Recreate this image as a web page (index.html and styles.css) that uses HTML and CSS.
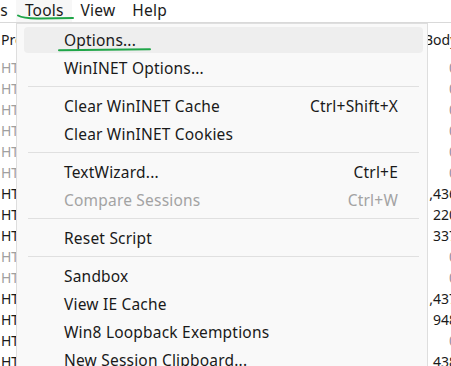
FILE: index.html
```html
<!DOCTYPE html>
<html lang="en">
<head>
    <meta charset="UTF-8">
    <title>Fiddler - Tools menu</title>
    <link rel="stylesheet" href="styles.css">
</head>
<body>
    <div class="menubar">
        <span class="menu-title">Rules</span>
        <span class="menu-title is-open">Tools</span>
        <span class="menu-title">View</span>
        <span class="menu-title">Help</span>
    </div>

    <div class="sessions">
        <div class="row head"><span class="proto">Protocol</span><span class="host"></span><span class="body">Body</span></div>
        <div class="row dim"><span class="proto">HTTP</span><span class="host"></span><span class="body">0</span></div>
        <div class="row dim"><span class="proto">HTTP</span><span class="host"></span><span class="body">0</span></div>
        <div class="row dim"><span class="proto">HTTP</span><span class="host"></span><span class="body">0</span></div>
        <div class="row dim"><span class="proto">HTTP</span><span class="host"></span><span class="body">0</span></div>
        <div class="row dim"><span class="proto">HTTP</span><span class="host"></span><span class="body">0</span></div>
        <div class="row dim"><span class="proto">HTTP</span><span class="host"></span><span class="body">0</span></div>
        <div class="row"><span class="proto">HTTP</span><span class="host"></span><span class="body">1,436</span></div>
        <div class="row"><span class="proto">HTTP</span><span class="host"></span><span class="body">220</span></div>
        <div class="row"><span class="proto">HTTP</span><span class="host"></span><span class="body">337</span></div>
        <div class="row dim"><span class="proto">HTTP</span><span class="host"></span><span class="body">0</span></div>
        <div class="row dim"><span class="proto">HTTP</span><span class="host"></span><span class="body">0</span></div>
        <div class="row"><span class="proto">HTTP</span><span class="host"></span><span class="body">1,437</span></div>
        <div class="row"><span class="proto">HTTP</span><span class="host"></span><span class="body">948</span></div>
        <div class="row"><span class="proto">HTTP</span><span class="host"></span><span class="body zero">0</span></div>
        <div class="row"><span class="proto">HTTP</span><span class="host"></span><span class="body">438</span></div>
    </div>

    <!-- Tools dropdown, open over the session list -->
    <div class="dropdown">
        <div class="item active"><span>Options...</span></div>
        <div class="item"><span>WinINET Options...</span></div>
        <div class="sep"></div>
        <div class="item"><span>Clear WinINET Cache</span><span>Ctrl+Shift+X</span></div>
        <div class="item"><span>Clear WinINET Cookies</span></div>
        <div class="sep"></div>
        <div class="item"><span>TextWizard...</span><span>Ctrl+E</span></div>
        <div class="item disabled"><span>Compare Sessions</span><span>Ctrl+W</span></div>
        <div class="sep"></div>
        <div class="item"><span>Reset Script</span></div>
        <div class="sep"></div>
        <div class="item"><span>Sandbox</span></div>
        <div class="item"><span>View IE Cache</span></div>
        <div class="item"><span>Win8 Loopback Exemptions</span></div>
        <div class="item"><span>New Session Clipboard...</span></div>
    </div>

    <!-- green hand-drawn marks -->
    <svg class="marks" width="451" height="366" viewBox="0 0 451 366">
        <path d="M18 15.5 C 22 18, 28 18.6, 40 18.4 L 73 18" />
        <path d="M59 50.2 C 90 49.8, 120 49.6, 150 49.2" />
    </svg>
</body>
</html>
```

FILE: styles.css
```css
html, body {
    margin: 0;
    overflow: hidden;
}

body {
    position: relative;
    width: 451px;
    height: 366px;
    font-family: "Noto Sans", "Open Sans", sans-serif;
    font-size: 15.5px;
    letter-spacing: 0.2px;
    color: #1a1a1a;
    background: #fff;
}

.menubar {
    display: flex;
    height: 22px;
    margin-left: -41px;
    border-bottom: 1px solid #d9d9d9;
    line-height: 21px;
}

.menu-title {
    padding: 0 8.5px;
}

.menu-title.is-open {
    background-color: #f7f7f7;
}

.sessions {
    width: 457px;
    font-size: 14px;
    letter-spacing: 0;
}

.row {
    display: flex;
    height: 21px;
    line-height: 21px;
}

.row.head {
    height: 34px;
    line-height: 34px;
}

.proto {
    width: 60px;
    padding-left: 1px;
    overflow: hidden;
    white-space: nowrap;
}

.host {
    flex: 1;
}

.body {
    width: 60px;
    text-align: right;
}

.head .body {
    text-align: left;
    padding-left: 27px;
    box-sizing: border-box;
}

.row.dim .proto {
    color: #a0a0a0;
}

.row.dim .body,
.body.zero {
    color: #938fa0;
}

.dropdown {
    position: absolute;
    left: 16px;
    top: 23px;
    display: flex;
    flex-direction: column;
    width: 412px;
    height: 360px;
    box-sizing: border-box;
    padding: 2px 4px 3px 7px;
    background-color: #f9f9f9;
    border: 1px solid #dedede;
}

.item {
    display: flex;
    flex: none;
    justify-content: space-between;
    align-items: center;
    height: 26px;
    margin: 1px 0;
    padding: 0 25px 0 40px;
    border-radius: 4px;
    white-space: nowrap;
}

.item.active {
    background-color: #eeeeee;
}

.item.disabled {
    color: #a3a3a3;
}

.sep {
    flex: none;
    height: 1px;
    margin: 4px 4px 5px;
    background-color: #e0e0e0;
}

.marks {
    position: absolute;
    left: 0;
    top: 0;
    pointer-events: none;
}

.marks path {
    fill: none;
    stroke: #1fa548;
    stroke-width: 2;
    stroke-linecap: round;
}
```
